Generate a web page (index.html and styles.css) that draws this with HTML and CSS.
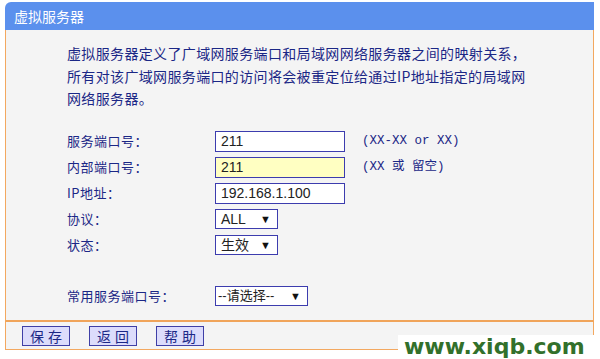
FILE: index.html
```html
<!DOCTYPE html>
<html lang="zh-CN">
<head>
<meta charset="utf-8">
<title>虚拟服务器</title>
<link rel="stylesheet" href="styles.css">
</head>
<body>
<div class="panel">
  <div class="header">虚拟服务器</div>
  <div class="content">
    <p class="desc">虚拟服务器定义了广域网服务端口和局域网网络服务器之间的映射关系，<br>所有对该广域网服务端口的访问将会被重定位给通过IP地址指定的局域网<br>网络服务器。</p>
    <div class="form">
      <div class="label">服务端口号：</div>
      <div class="field"><div class="input">211</div></div>
      <div class="hint">(XX-XX or XX)</div>

      <div class="label">内部端口号：</div>
      <div class="field"><div class="input yellow">211</div></div>
      <div class="hint">(XX 或 留空)</div>

      <div class="label">IP地址：</div>
      <div class="field"><div class="input">192.168.1.100</div></div>
      <div class="hint"></div>

      <div class="label">协议：</div>
      <div class="field"><div class="select"><span>ALL</span><span class="arrow">▼</span></div></div>
      <div class="hint"></div>

      <div class="label">状态：</div>
      <div class="field"><div class="select"><span>生效</span><span class="arrow">▼</span></div></div>
      <div class="hint"></div>
    </div>
    <div class="form common">
      <div class="label">常用服务端口号：</div>
      <div class="field"><div class="select wide"><span>--请选择--</span><span class="arrow">▼</span></div></div>
    </div>
  </div>
  <div class="buttons">
    <div class="btn">保存</div>
    <div class="btn">返回</div>
    <div class="btn">帮助</div>
  </div>
</div>
<div class="watermark">www.xiqb.com</div>
</body>
</html>
```

FILE: styles.css
```css
html, body {
  margin: 0;
  padding: 0;
  background: #ffffff;
}
body {
  width: 600px;
  height: 359px;
  overflow: hidden;
  position: relative;
  font-family: "Noto Sans CJK SC", "Liberation Sans", sans-serif;
  color: #1b2786;
}
.panel {
  margin: 2px 6px 0 5px;
}
.header {
  height: 28px;
  line-height: 28px;
  background: #5b90ed;
  color: #ffffff;
  font-size: 14px;
  padding-left: 9px;
  border-top-left-radius: 6px;
}
.content {
  background: #f4f4f4;
  border-left: 1px solid #f3a860;
  border-right: 1px solid #f3a860;
  border-bottom: 2px solid #f0a45a;
  padding: 12px 0 0 61px;
  height: 278px;
}
.desc {
  margin: 0;
  font-size: 14px;
  line-height: 22.5px;
  letter-spacing: 0.35px;
}
.form {
  display: grid;
  grid-template-columns: 148px 147px auto;
  row-gap: 6px;
  margin-top: 21px;
  font-size: 13px;
}
.form.common {
  margin-top: 31px;
  grid-template-columns: 148px auto;
}
.label {
  height: 20px;
  line-height: 20px;
  letter-spacing: 0.5px;
}
.field {
  height: 20px;
}
.input {
  box-sizing: border-box;
  width: 130px;
  height: 21px;
  border: 1px solid #3c3cae;
  background: #ffffff;
  color: #222222;
  font-family: "Liberation Sans", sans-serif;
  font-size: 14px;
  line-height: 19px;
  padding-left: 5px;
}
.input.yellow {
  background: #ffffc2;
}
.select {
  box-sizing: border-box;
  width: 63px;
  height: 20px;
  border: 1px solid #3c3cae;
  background: #ffffff;
  color: #222222;
  font-family: "Liberation Sans", "Noto Sans CJK SC", sans-serif;
  font-size: 14px;
  line-height: 18px;
  padding: 0 6px 0 5px;
  display: flex;
  justify-content: space-between;
  align-items: center;
}
.select.wide {
  width: 93px;
  padding-left: 2px;
  font-size: 13px;
}
.arrow {
  font-size: 11px;
  color: #111111;
}
.hint {
  height: 20px;
  line-height: 20px;
  font-family: "Liberation Mono", "Noto Sans CJK SC", monospace;
  font-size: 12.5px;
}
.buttons {
  background: #f4f4f4;
  border-left: 1px solid #f3a860;
  border-right: 1px solid #f3a860;
  border-bottom: 1px solid #f3a860;
  height: 27px;
  display: flex;
  gap: 19px;
  padding-left: 16px;
  align-items: center;
}
.btn {
  box-sizing: border-box;
  width: 48px;
  height: 20px;
  border: 1px solid #3f3fa6;
  background: #dcdcfb;
  color: #1b2786;
  font-size: 14px;
  line-height: 18px;
  text-align: center;
  letter-spacing: 4px;
  padding-left: 4px;
}
.watermark {
  position: absolute;
  left: 398px;
  top: 335px;
  width: 202px;
  height: 24px;
  background: #ffffff;
  color: #32702b;
  font-family: "DejaVu Sans", sans-serif;
  font-weight: bold;
  font-size: 22px;
  line-height: 24px;
  padding-left: 6px;
  box-sizing: border-box;
}
```
